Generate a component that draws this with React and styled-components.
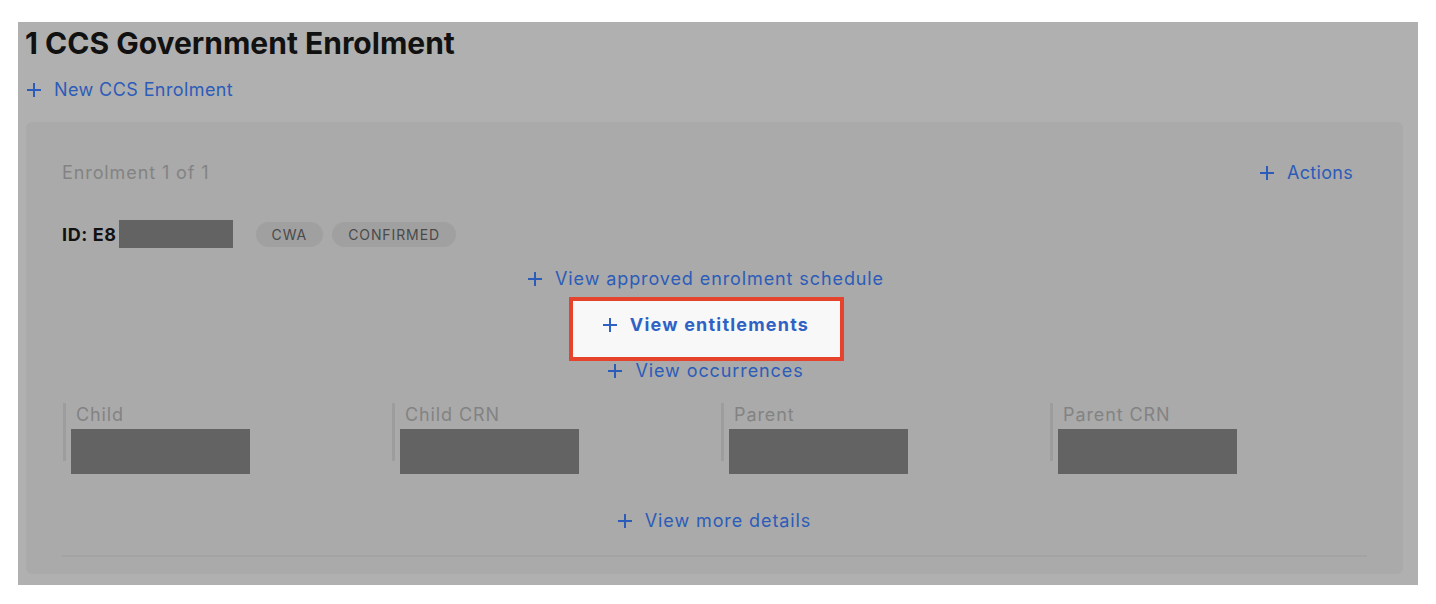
import React from "react";
import styled, { createGlobalStyle } from "styled-components";

const GlobalStyle = createGlobalStyle`
  body {
    margin: 0;
    background: #ffffff;
    font-family: Inter, "Liberation Sans", Arial, sans-serif;
  }
`;

const BLUE = "#2c5cb9";

const Plus = ({ size = 14 }) => (
  <svg width={size} height={size} viewBox="0 0 14 14" fill="none" stroke="currentColor" strokeWidth="2">
    <path d="M7 0v14M0 7h14" />
  </svg>
);

const fields = ["Child", "Child CRN", "Parent", "Parent CRN"];
const links = [
  { label: "View approved enrolment schedule" },
  { label: "View entitlements", highlight: true },
  { label: "View occurrences" },
];

const App = () => {
  return (
    <Page>
      <GlobalStyle />
      <Overlay>
        <Title>1 CCS Government Enrolment</Title>
        <TextLink href="#" $ml={9} $mt={18} $spacing={0.4}>
          <Plus />
          <span>New CCS Enrolment</span>
        </TextLink>
        <Card>
          <HeaderRow>
            <Count>Enrolment 1 of 1</Count>
            <TextLink href="#" $mr={14} $spacing={0.3}>
              <Plus />
              <span>Actions</span>
            </TextLink>
          </HeaderRow>
          <IdRow>
            <IdText>ID: E8</IdText>
            <Redacted $w={114} $h={28} />
            <Badges>
              <Badge>CWA</Badge>
              <Badge>CONFIRMED</Badge>
            </Badges>
          </IdRow>
          <LinkList>
            {links.map((l) => (
              <LinkRow key={l.label}>
                <TextLink href="#" $highlight={l.highlight}>
                  <Plus />
                  <span>{l.label}</span>
                </TextLink>
              </LinkRow>
            ))}
          </LinkList>
          <Fields>
            {fields.map((f) => (
              <Field key={f}>
                <FieldLabel>{f}</FieldLabel>
                <Redacted $w={179} $h={45} $cover />
              </Field>
            ))}
          </Fields>
          <MoreRow>
            <TextLink href="#">
              <Plus />
              <span>View more details</span>
            </TextLink>
          </MoreRow>
          <Divider />
        </Card>
      </Overlay>
    </Page>
  );
};

const Page = styled.div`
  padding: 22px 18px 19px 18px;
`;

const Overlay = styled.div`
  width: 1400px;
  background: #b0b0b0;
  padding: 4px 0 11px 0;
  display: flex;
  flex-direction: column;
  align-items: flex-start;
`;

const Title = styled.h1`
  margin: 0 0 0 7px;
  font-size: 30px;
  line-height: 34px;
  font-weight: 700;
  color: #111111;
  letter-spacing: 0;
`;

const TextLink = styled.a`
  position: relative;
  z-index: 0;
  display: inline-flex;
  align-items: center;
  gap: 13px;
  height: 24px;
  margin: ${(p) => `${p.$mt || 0}px ${p.$mr || 0}px 0 ${p.$ml || 0}px`};
  font-size: 18px;
  line-height: 24px;
  color: ${(p) => (p.$highlight ? "#2f62c4" : BLUE)};
  font-weight: ${(p) => (p.$highlight ? 700 : 400)};
  letter-spacing: ${(p) => (p.$highlight ? 1.2 : p.$spacing ?? 0.9)}px;
  text-decoration: none;

  &::before {
    content: ${(p) => (p.$highlight ? '""' : "none")};
    position: absolute;
    z-index: -1;
    top: -16px;
    bottom: -24px;
    left: -34px;
    right: -35px;
    background: #f8f8f8;
    border: 4px solid #e5432b;
  }
`;

const Card = styled.section`
  align-self: stretch;
  margin: 20px 15px 0 8px;
  background: #aaaaaa;
  border-radius: 6px;
  padding: 39px 36px 17px 36px;
`;

const HeaderRow = styled.div`
  display: flex;
  align-items: center;
  justify-content: space-between;
  height: 24px;
`;

const Count = styled.span`
  font-size: 18px;
  line-height: 24px;
  color: #838383;
  letter-spacing: 0.9px;
`;

const IdRow = styled.div`
  display: flex;
  align-items: center;
  height: 28px;
  margin-top: 35px;
`;

const IdText = styled.span`
  font-size: 18px;
  font-weight: 700;
  color: #111111;
  letter-spacing: 0.6px;
  margin-right: 2px;
`;

const Redacted = styled.div`
  width: ${(p) => p.$w}px;
  height: ${(p) => p.$h}px;
  background: #636363;
  ${(p) =>
    p.$cover &&
    `
    position: absolute;
    top: 26px;
    left: 5px;
  `}
`;

const Badges = styled.div`
  display: flex;
  gap: 9px;
  margin-left: 23px;
`;

const Badge = styled.span`
  height: 25px;
  padding: 0 16px;
  border-radius: 13px;
  background: #a0a0a0;
  color: #4a4a4a;
  font-size: 14px;
  line-height: 25px;
  letter-spacing: 0.9px;
`;

const LinkList = styled.div`
  display: flex;
  flex-direction: column;
  align-items: center;
  margin: 8px 17px 0 0;
`;

const LinkRow = styled.div`
  height: 46px;
  display: flex;
  align-items: center;
`;

const Fields = styled.div`
  display: grid;
  grid-template-columns: repeat(4, 329px);
  margin-top: 9px;
`;

const Field = styled.div`
  position: relative;
  height: 58px;
  margin-left: 1px;
  padding-left: 10px;
  border-left: 3px solid #9d9d9d;
`;

const FieldLabel = styled.div`
  font-size: 18px;
  line-height: 24px;
  color: #838383;
  letter-spacing: 0.9px;
`;

const MoreRow = styled.div`
  display: flex;
  justify-content: center;
  align-items: center;
  height: 46px;
  margin-top: 37px;
`;

const Divider = styled.hr`
  margin: 11px 0 0 0;
  border: none;
  height: 2px;
  background: #a3a3a3;
`;

export default App;
